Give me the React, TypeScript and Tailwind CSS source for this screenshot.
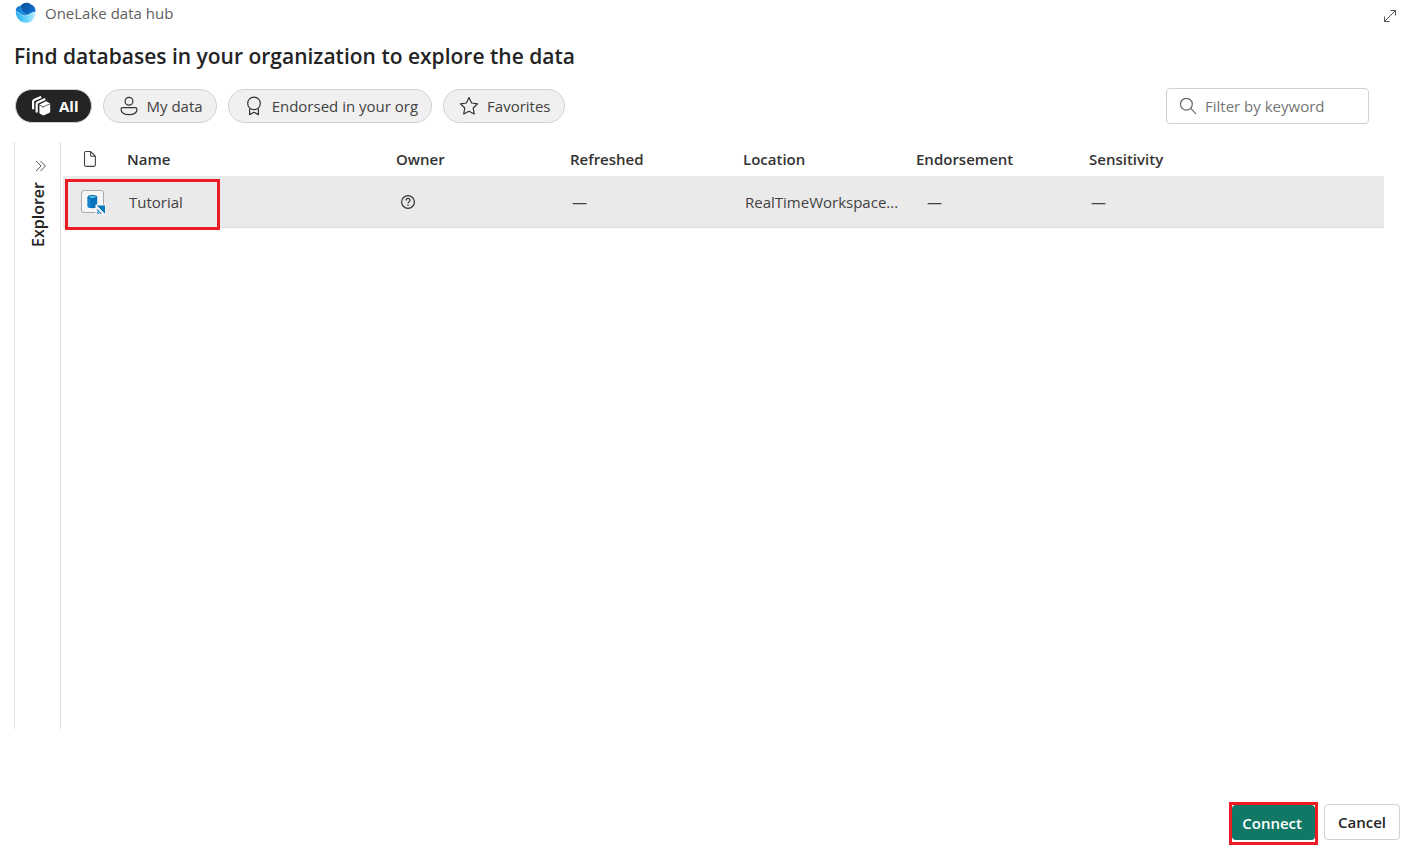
import type { ReactNode } from "react";

function OneLakeLogo() {
  return (
    <svg width="22" height="22" viewBox="0 0 22 22" aria-hidden="true">
      <defs>
        <linearGradient id="lake-top" x1="0" y1="0" x2="1" y2="1">
          <stop offset="0" stopColor="#0a4a94" />
          <stop offset="0.6" stopColor="#0d66bd" />
          <stop offset="1" stopColor="#1685dc" />
        </linearGradient>
        <linearGradient id="lake-left" x1="0" y1="0" x2="1" y2="1">
          <stop offset="0" stopColor="#1576cc" />
          <stop offset="1" stopColor="#1fa0ee" />
        </linearGradient>
        <linearGradient id="lake-low" x1="0" y1="0" x2="1" y2="0">
          <stop offset="0" stopColor="#25aff2" />
          <stop offset="0.5" stopColor="#62d2fa" />
          <stop offset="1" stopColor="#b8edfe" />
        </linearGradient>
      </defs>
      <path d="M6 3.4C8.4 0 13.6 -0.2 16 2.6C19.4 3.8 21 7 20.4 9.8C17.4 9.4 15.2 12 12.4 13C8 12 5.6 7.4 6 3.4Z" fill="url(#lake-top)" />
      <path d="M5.8 3.4C1.8 4 -0.2 7.4 1.2 9.6C4.4 9.8 5.8 13.8 9.2 13.8C10.6 13.8 11.6 13.5 12.6 13C8.6 11.4 5.8 7.2 5.8 3.4Z" fill="url(#lake-left)" />
      <path d="M0.8 9.6C4.2 10 5.6 14.2 9.6 14.2C14 14.2 15.6 9.6 20.6 10.4C20.2 16.8 16.2 20.8 11 20.8C5.4 20.8 0.8 16.2 0.8 9.6Z" fill="url(#lake-low)" />
    </svg>
  );
}

function ExpandIcon() {
  return (
    <svg width="14" height="14" viewBox="0 0 14 14" fill="none" stroke="#555" aria-hidden="true">
      <path d="M7.5 1.5H12.5V6.5M12.5 1.5L1.5 12.5M1.5 7.5V12.5H6.5" />
    </svg>
  );
}

function BoxesIcon() {
  return (
    <svg width="20" height="20" viewBox="0 0 20 20" aria-hidden="true">
      <path d="M8.4 8.6L14.4 5.4Q15 5.1 15.6 5.4L19.2 7.4V15.6Q19.2 16.4 18.5 16.8L12.4 19.6L9 17.8Q8.4 17.4 8.4 16.6Z" fill="#fff" />
      <path d="M8.4 8.9L12.1 10.9L19.2 7.8M12.1 10.9V11.8" fill="none" stroke="#242424" strokeWidth="0.7" />
      <path d="M5.7 16.4V7.9Q5.7 6.9 6.6 6.4L14.2 2.9M2.1 13.2V5.6Q2.1 4.6 3 4.1L10.2 0.9" fill="none" stroke="#fff" strokeWidth="2.2" />
    </svg>
  );
}

function PersonIcon() {
  return (
    <svg width="20" height="20" viewBox="0 0 20 20" fill="none" stroke="#333" strokeWidth="1.2" aria-hidden="true">
      <circle cx="10" cy="5.2" r="3.9" />
      <path d="M3.8 11.6H16.2Q18 11.6 18 13.2C18 16.6 14.8 18.6 10 18.6C5.2 18.6 2 16.6 2 13.2Q2 11.6 3.8 11.6Z" />
    </svg>
  );
}

function RibbonIcon() {
  return (
    <svg width="20" height="20" viewBox="0 0 20 20" fill="none" stroke="#333" strokeWidth="1.2" aria-hidden="true">
      <circle cx="10" cy="7.4" r="6.3" />
      <path d="M5.6 12.4V18.6L10 16.3L14.4 18.6V12.4" strokeLinejoin="round" />
    </svg>
  );
}

function StarIcon() {
  return (
    <svg width="20" height="20" viewBox="0 0 20 20" fill="none" stroke="#333" strokeWidth="1.2" aria-hidden="true">
      <path d="M10 1.6L12.6 7L18.6 7.8L14.2 12L15.3 18L10 15.2L4.7 18L5.8 12L1.4 7.8L7.4 7Z" strokeLinejoin="round" />
    </svg>
  );
}

function SearchIcon() {
  return (
    <svg width="18" height="18" viewBox="0 0 18 18" fill="none" stroke="#666" strokeWidth="1.2" className="shrink-0" aria-hidden="true">
      <circle cx="7.4" cy="7.2" r="5.9" />
      <path d="M11.6 11.4L16.8 16.6" strokeLinecap="round" />
    </svg>
  );
}

function DocumentIcon() {
  return (
    <svg width="14" height="18" viewBox="0 0 14 18" fill="none" stroke="#444" strokeWidth="1.1" aria-hidden="true">
      <path d="M3 1.5H7.6L12.4 6.3V14.8Q12.4 16.4 10.8 16.4H3Q1.5 16.4 1.5 14.8V3Q1.5 1.5 3 1.5ZM7.6 1.5V5Q7.6 6.3 8.9 6.3H12.4" />
    </svg>
  );
}

function ChevronsIcon() {
  return (
    <svg width="12" height="12" viewBox="0 0 12 12" fill="none" stroke="#555" aria-hidden="true">
      <path d="M1.2 1L6 6L1.2 11M5.6 1L10.4 6L5.6 11" />
    </svg>
  );
}

function DatabaseIcon() {
  return (
    <svg width="26" height="26" viewBox="0 0 26 26" aria-hidden="true">
      <rect x="1.5" y="1.5" width="22" height="22" rx="2.5" fill="#f6f6f6" stroke="#aaa" />
      <path d="M7.6 8V17.2C7.6 18.3 9.9 19.2 12.4 19.2S17.2 18.3 17.2 17.2V8Z" fill="#0a73bb" />
      <path d="M7.6 8H10.4V19C8.7 18.7 7.6 18 7.6 17.2Z" fill="#1686d2" />
      <ellipse cx="12.4" cy="8" rx="4.8" ry="2" fill="#0863a5" />
      <ellipse cx="12.4" cy="8.1" rx="3.5" ry="1.1" fill="#54c4f2" />
      <path d="M15.5 15.5H26V26H15.5Z" fill="#f4f4f4" />
      <path d="M16.8 16.6H25V24.8Z" fill="#0878bd" />
      <path d="M17 20.6L21.2 24.8M17 23.2L18.6 24.8" fill="none" stroke="#0878bd" strokeWidth="1.1" />
    </svg>
  );
}

function QuestionIcon() {
  return (
    <svg width="16" height="16" viewBox="0 0 16 16" fill="none" stroke="#333" strokeWidth="1.2" aria-label="Unknown owner">
      <circle cx="8" cy="8" r="6.4" />
      <path d="M6 6.4C6 3.7 10 3.8 10 6.3C10 7.8 8 8 8 9.4" />
      <circle cx="8" cy="11.3" r="0.8" fill="#333" stroke="none" />
    </svg>
  );
}

function Pill({ icon, children }: { icon: ReactNode; children: ReactNode }) {
  return (
    <button type="button" className="flex h-[34px] items-center gap-2 rounded-full border border-[#d1d1d1] bg-[#f0f0f0] pl-[15px] pr-[13px] text-[15px] text-[#424242]">
      {icon}
      {children}
    </button>
  );
}

const columns = ["Owner", "Refreshed", "Location", "Endorsement", "Sensitivity"];

export default function App() {
  return (
    <div className="flex min-h-screen flex-col bg-white pb-[11px] font-['Open_Sans',sans-serif] text-[15px] leading-5 text-[#242424]">
      <header className="flex items-center justify-between pl-[15px] pr-[9px] pt-[2px]">
        <div className="flex h-[22px] items-center gap-2 text-[#616161]">
          <OneLakeLogo />
          <span>OneLake data hub</span>
        </div>
        <button type="button" aria-label="Expand" className="mt-[6px]">
          <ExpandIcon />
        </button>
      </header>

      <h1 className="mt-[17px] pl-[14px] text-[21px] font-semibold leading-[30px]">
        Find databases in your organization to explore the data
      </h1>

      <div className="mt-[17px] flex items-center justify-between pl-[15px] pr-[37px]">
        <div className="flex gap-[11px]">
          <button type="button" className="flex h-[34px] items-center gap-2 rounded-full border border-[#d1d1d1] bg-[#242424] pl-[15px] pr-3 text-[15px] font-bold text-white">
            <BoxesIcon />
            All
          </button>
          <Pill icon={<PersonIcon />}>My data</Pill>
          <Pill icon={<RibbonIcon />}>Endorsed in your org</Pill>
          <Pill icon={<StarIcon />}>Favorites</Pill>
        </div>
        <label className="flex h-9 w-[203px] items-center gap-2 rounded border border-[#d1d1d1] px-3">
          <SearchIcon />
          <input
            type="text"
            aria-label="Filter by keyword"
            placeholder="Filter by keyword"
            className="w-full min-w-0 text-[15px] outline-none placeholder:text-[#757575]"
          />
        </label>
      </div>

      <main className="mt-[18px] flex flex-1 pl-[14px] pr-[22px]">
        <aside className="flex w-[47px] shrink-0 flex-col items-center border-x border-[#e0e0e0] pt-[18px]">
          <button type="button" aria-label="Expand explorer" className="ml-[7px]">
            <ChevronsIcon />
          </button>
          <span className="mt-[10px] rotate-180 text-[16px] font-semibold [writing-mode:vertical-rl]">Explorer</span>
        </aside>

        <div className="relative min-w-0 flex-1 pl-[2px]">
          <table className="w-full table-fixed border-collapse text-left">
            <colgroup>
              <col className="w-16" />
              <col className="w-[269px]" />
              <col className="w-[174px]" />
              <col className="w-[173px]" />
              <col className="w-[173px]" />
              <col className="w-[173px]" />
              <col />
            </colgroup>
            <thead>
              <tr className="h-[34px]">
                <th className="pl-5" aria-label="Type">
                  <DocumentIcon />
                </th>
                <th className="font-semibold text-[#333]">Name</th>
                {columns.map((c) => (
                  <th key={c} className="font-semibold text-[#333]">
                    {c}
                  </th>
                ))}
              </tr>
            </thead>
            <tbody className="[&_td]:pt-[2px]">
              <tr className="h-[51px] border-b border-[#dcdcdc] bg-[#eaeaea] text-[#424242]">
                <td className="pl-[17px]">
                  <DatabaseIcon />
                </td>
                <td className="pl-[2px]">Tutorial</td>
                <td className="pl-1">
                  <QuestionIcon />
                </td>
                <td className="pl-[2px]">—</td>
                <td className="whitespace-nowrap pl-[2px]">RealTimeWorkspace...</td>
                <td className="pl-[11px]">—</td>
                <td className="pl-[2px]">—</td>
              </tr>
            </tbody>
          </table>
          <div className="pointer-events-none absolute left-1 top-[37px] h-[51px] w-[155px] border-[3px] border-[#ed1c24]" />
        </div>
      </main>

      <footer className="mt-[73px] flex items-start justify-end gap-[6px] pr-[6px]">
        <div className="-mb-[5px] border-[3px] border-[#ed1c24] pb-[2px]">
          <button type="button" className="block h-[35px] rounded bg-[#117865] pl-[10px] pr-[13px] text-[15px] font-semibold text-white">
            Connect
          </button>
        </div>
        <button type="button" className="mt-[2px] h-9 rounded border border-[#d1d1d1] px-[13px] text-[15px] font-semibold">
          Cancel
        </button>
      </footer>
    </div>
  );
}
